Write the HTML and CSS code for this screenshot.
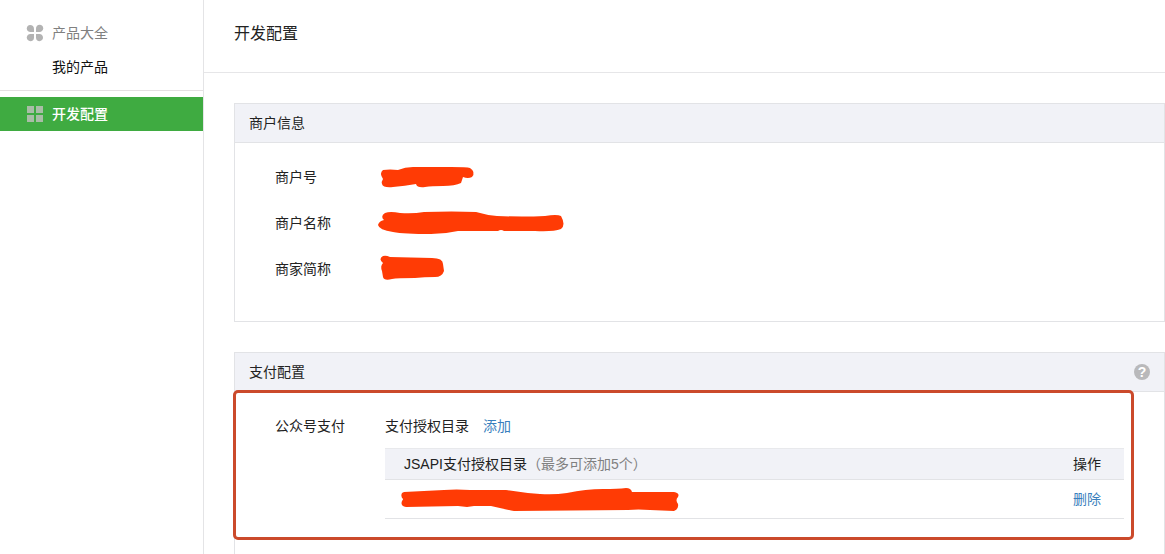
FILE: index.html
```html
<!DOCTYPE html>
<html lang="zh-CN">
<head>
    <meta charset="UTF-8">
    <meta name="viewport" content="width=device-width, initial-scale=1.0">
    <title>开发配置</title>
    <link rel="stylesheet" href="styles.css">
</head>
<body>

    <!-- 左侧菜单 -->
    <nav class="sidebar">
        <div class="menu-group">
            <div class="menu-title">
                <svg class="menu-icon" width="18" height="18" viewBox="0 0 18 18" fill="#b3b3b3">
                    <path d="M4 1C6.500 1 8 2.500 8 5V8H4.500C2.300 8 .8 6.500 .8 4.500S2.200 1 4 1Z"/>
                    <path d="M13.700.8C15.700.8 17.200 2.300 17.200 4.300S15.700 8 13.500 8H10V4.500C10 2.300 11.500.8 13.700.8Z"/>
                    <path d="M4.300 10H8V13.700C8 15.700 6.500 17.200 4.400 17.200S.8 15.700.8 13.600 2.300 10 4.300 10Z"/>
                    <path d="M10 10H13.500C15.500 10 17 11.500 17 13.600S15.500 17.200 13.500 17.200 10 15.700 10 13.700Z"/>
                </svg>
                <span>产品大全</span>
            </div>
            <a class="menu-item" href="#">我的产品</a>
        </div>
        <a class="menu-item active" href="#">
            <svg class="menu-icon" width="18" height="18" viewBox="0 0 18 18" fill="#a9bda6">
                <path d="M1 1h7v7H1zM10 1h7v7h-7zM1 10h7v7H1zM10 10h7v7h-7z"/>
            </svg>
            <span>开发配置</span>
        </a>
    </nav>

    <main class="content">
        <header class="page-header">
            <h1>开发配置</h1>
        </header>

        <div class="panels">
            <!-- 商户信息 -->
            <section class="panel">
                <h2 class="panel-title">商户信息</h2>
                <dl class="info">
                    <div class="row">
                        <dt>商户号</dt>
                        <dd>
                            <svg class="mask" width="110" height="40" viewBox="0 0 110 40">
                                <path d="M8 13Q15 12 23 13Q30 10 38 10L76 10Q92 10 95 11Q101 15 97 20Q93 22 88 20L86 26Q80 29 68 29Q57 29 50 30Q42 31 41 27Q30 29 18 30Q8 31 7 27Q6 25 8 22Q4 16 8 13Z"/>
                            </svg>
                        </dd>
                    </div>
                    <div class="row">
                        <dt>商户名称</dt>
                        <dd>
                            <svg class="mask" width="200" height="40" viewBox="0 0 200 40">
                                <path d="M10 10Q15 8 25 10Q38 11 49 9Q78 8 101 9Q111 12 122 13Q148 14 170 13Q182 11 186 13Q191 22 186 26Q178 29 160 28L129 28Q126 26 123 28L83 28Q70 31 56 31Q29 31 18 29Q4 27 3 22Q4 18 9 17Q5 13 10 10Z"/>
                            </svg>
                        </dd>
                    </div>
                    <div class="row">
                        <dt>商家简称</dt>
                        <dd>
                            <svg class="mask" width="110" height="40" viewBox="0 0 110 40">
                                <path d="M8 7Q11 6 15 8L57 9Q68 9 68 15L69 22Q67 28 60 28Q49 28 40 29Q22 29 17 30Q9 32 8 28L7 22Q5 17 8 14Q3 10 8 7Z"/>
                            </svg>
                        </dd>
                    </div>
                </dl>
            </section>

            <!-- 支付配置 -->
            <section class="panel panel-last">
                <h2 class="panel-title">
                    <span>支付配置</span>
                    <button class="help" type="button" aria-label="帮助">?</button>
                </h2>
                <div class="pay">
                    <div class="pay-label">公众号支付</div>
                    <div class="pay-main">
                        <div class="dir-head">
                            <span>支付授权目录</span>
                            <a href="#">添加</a>
                        </div>
                        <table class="dir-table">
                            <thead>
                                <tr>
                                    <th>JSAPI支付授权目录<span class="tip">（最多可添加5个）</span></th>
                                    <th class="action">操作</th>
                                </tr>
                            </thead>
                            <tbody>
                                <tr>
                                    <td>
                                        <svg class="mask" width="290" height="30" viewBox="0 0 290 30">
                                            <path d="M10 8Q30 7 50 6Q62 5 76 6L112 6Q130 9 146 10Q160 11 173 9Q192 5 209 5Q224 5 232 4Q237 4 238 8L280 8Q286 9 284 13Q281 16 284 20Q285 25 280 27L256 26Q244 25 234 26L120 27Q110 25 97 22L80 22L73 23L64 22L12 23Q6 22 8 17Q10 15 8 14Q6 9 10 8Z"/>
                                        </svg>
                                    </td>
                                    <td class="action"><a href="#">删除</a></td>
                                </tr>
                            </tbody>
                        </table>
                    </div>
                </div>
            </section>
        </div>
    </main>

</body>
</html>
```
FILE: styles.css
```css
* {
    box-sizing: border-box;
}
body {
    display: flex;
    min-height: 100vh;
    margin: 0;
    background-color: #ffffff;
    color: #222222;
    font-family: "Liberation Sans", "Noto Sans CJK SC", sans-serif;
    font-size: 14px;
    line-height: 20px;
}
a {
    color: #3a7fbd;
    text-decoration: none;
}

/* 左侧菜单 */
.sidebar {
    flex: none;
    width: 204px;
    padding-top: 16px;
    border-right: 1px solid #e4e4e6;
}
.menu-group {
    margin-bottom: 6px;
    padding-bottom: 6px;
    border-bottom: 1px solid #e4e0e2;
}
.menu-title,
.menu-item {
    display: flex;
    align-items: center;
    height: 34px;
    padding-left: 52px;
    color: #111111;
}
.menu-title {
    color: #808080;
}
.menu-icon {
    margin-left: -26px;
    margin-right: 8px;
}
.menu-item.active {
    background-color: #3fab41;
    color: #ffffff;
    font-weight: 500;
}

/* 右侧内容 */
.content {
    flex: 1;
    display: flex;
    flex-direction: column;
    min-width: 0;
}
.page-header {
    padding: 22px 30px 26px;
    border-bottom: 1px solid #e6e6e8;
}
.page-header h1 {
    margin: 0;
    font-size: 16px;
    font-weight: normal;
    line-height: 24px;
}
.panels {
    flex: 1;
    display: flex;
    flex-direction: column;
    gap: 30px;
    padding: 30px 0 0 30px;
}
.panel {
    border: 1px solid #e2e3e6;
}
.panel-last {
    flex: 1;
    border-bottom: 0;
}
.panel-title {
    display: flex;
    justify-content: space-between;
    align-items: center;
    height: 39px;
    margin: 0;
    padding: 0 14px;
    border-bottom: 1px solid #e2e3e6;
    background-color: #f1f2f7;
    font-size: 14px;
    font-weight: normal;
}
.help {
    width: 16px;
    height: 16px;
    padding: 0;
    border: 0;
    border-radius: 50%;
    background-color: #b9b9bb;
    color: #ffffff;
    font-family: inherit;
    font-size: 14px;
    font-weight: bold;
    line-height: 16px;
}

/* 商户信息 */
.info {
    margin: 0;
    padding: 11px 40px 29px;
}
.row {
    display: flex;
    align-items: center;
    height: 46px;
}
.row dt {
    width: 110px;
}
.row dd {
    margin: 0;
}
.mask {
    display: block;
    margin-left: -10px;
    fill: #ff3b05;
}

/* 支付配置 */
.pay {
    position: relative;
    display: flex;
    padding: 24px 40px 20px;
}
.pay::after {
    content: "";
    position: absolute;
    top: -2px;
    right: 30px;
    bottom: -1px;
    left: -2px;
    border: 3px solid #cb4a2b;
    border-radius: 5px;
    pointer-events: none;
}
.pay-label {
    width: 110px;
}
.pay-main {
    flex: 1;
}
.dir-head {
    display: flex;
    gap: 14px;
    margin-bottom: 12px;
}
.dir-table {
    width: 100%;
    border-spacing: 0;
}
.dir-table th,
.dir-table td {
    padding: 0 0 0 19px;
    border-bottom: 1px solid #e2e3e6;
    text-align: left;
}
.dir-table th {
    height: 32px;
    border-top: 1px solid #e8e9ec;
    background-color: #f1f2f7;
    font-weight: normal;
}
.dir-table td {
    height: 39px;
}
.dir-table .action {
    width: 51px;
    padding-left: 0;
}
.tip {
    color: #808080;
}
```
